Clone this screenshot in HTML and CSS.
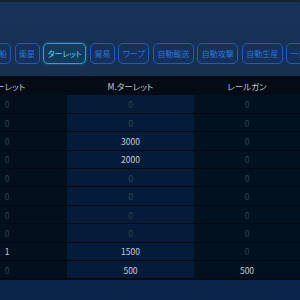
FILE: index.html
```html
<!DOCTYPE html>
<html lang="ja">
<head>
  <meta charset="UTF-8"/>
  <title>ターレット</title>
  <link rel="stylesheet" href="styles.css">
</head>
<body>
  <!-- ========== TOP / TABS ========== -->
  <header class="top">
    <nav class="tabs">
      <button class="tab">転船</button>
      <button class="tab">衛星</button>
      <button class="tab active">ターレット</button>
      <button class="tab">貿易</button>
      <button class="tab">ワープ</button>
      <button class="tab">自動輸送</button>
      <button class="tab">自動攻撃</button>
      <button class="tab">自動生産</button>
      <button class="tab">一括設定</button>
    </nav>
  </header>

  <!-- ========== TABLE ========== -->
  <div class="table-wrap">
    <table class="stats">
      <colgroup><col class="c1"><col class="c2"><col class="c3"></colgroup>
      <thead>
        <tr><th>ターレット</th><th>M.ターレット</th><th>レールガン</th></tr>
      </thead>
      <tbody>
        <tr><td class="zero">0</td><td class="zero">0</td><td class="zero">0</td></tr>
        <tr><td class="zero">0</td><td class="zero">0</td><td class="zero">0</td></tr>
        <tr><td class="zero">0</td><td>3000</td><td class="zero">0</td></tr>
        <tr><td class="zero">0</td><td>2000</td><td class="zero">0</td></tr>
        <tr><td class="zero">0</td><td class="zero">0</td><td class="zero">0</td></tr>
        <tr><td class="zero">0</td><td class="zero">0</td><td class="zero">0</td></tr>
        <tr><td class="zero">0</td><td class="zero">0</td><td class="zero">0</td></tr>
        <tr><td class="zero">0</td><td class="zero">0</td><td class="zero">0</td></tr>
        <tr><td>1</td><td>1500</td><td class="zero">0</td></tr>
        <tr><td class="zero">0</td><td>500</td><td>500</td></tr>
      </tbody>
    </table>
  </div>

  <div class="bottom"></div>
</body>
</html>
```
FILE: styles.css
```css
*{margin:0;padding:0;box-sizing:border-box}
html,body{width:300px;height:300px;overflow:hidden}
body{font-family:'Noto Sans CJK JP','Noto Sans',sans-serif;font-feature-settings:"palt";background:#08203f;color:#c4cad2;font-size:8.5px}

/* top bar */
.top{height:76px;border-top:2px solid #1a2334;background:linear-gradient(#193357,#163052);padding-top:41px;overflow:hidden}
.tabs{display:flex;gap:3.5px;margin-left:-14px;white-space:nowrap}
.tab{flex:none;height:21px;padding:0 3.5px;border:1px solid #1f5cba;border-radius:5px;background:#15305a;color:#2f74d4;font:400 8px/19px 'Noto Sans CJK JP',sans-serif;font-feature-settings:"palt"}
.tab.active{border-color:#19acc9;background:#123a5c;color:#66d4f2;box-shadow:0 0 3px rgba(30,190,230,.45)}

/* table */
.table-wrap{height:203px;overflow:hidden}
.stats{margin-left:-53px;border-collapse:collapse;table-layout:fixed;width:353px}
.c1{width:120px}.c2{width:127px}.c3{width:106px}
.stats th{height:19px;background:#040b14;color:#c2c8cf;font-weight:400;text-align:center;font-size:8.5px}
.stats td{height:18.4px;text-align:center;border-bottom:1px solid #010811;color:#c4cad2}
.stats td:nth-child(1){background:#020f1c}
.stats td:nth-child(2){background:#041c3a}
.stats td:nth-child(3){background:#021120}
.stats td.zero{color:#34414f}

.bottom{height:21px;border-top:1px solid #010913;background:#0a2548}
```
